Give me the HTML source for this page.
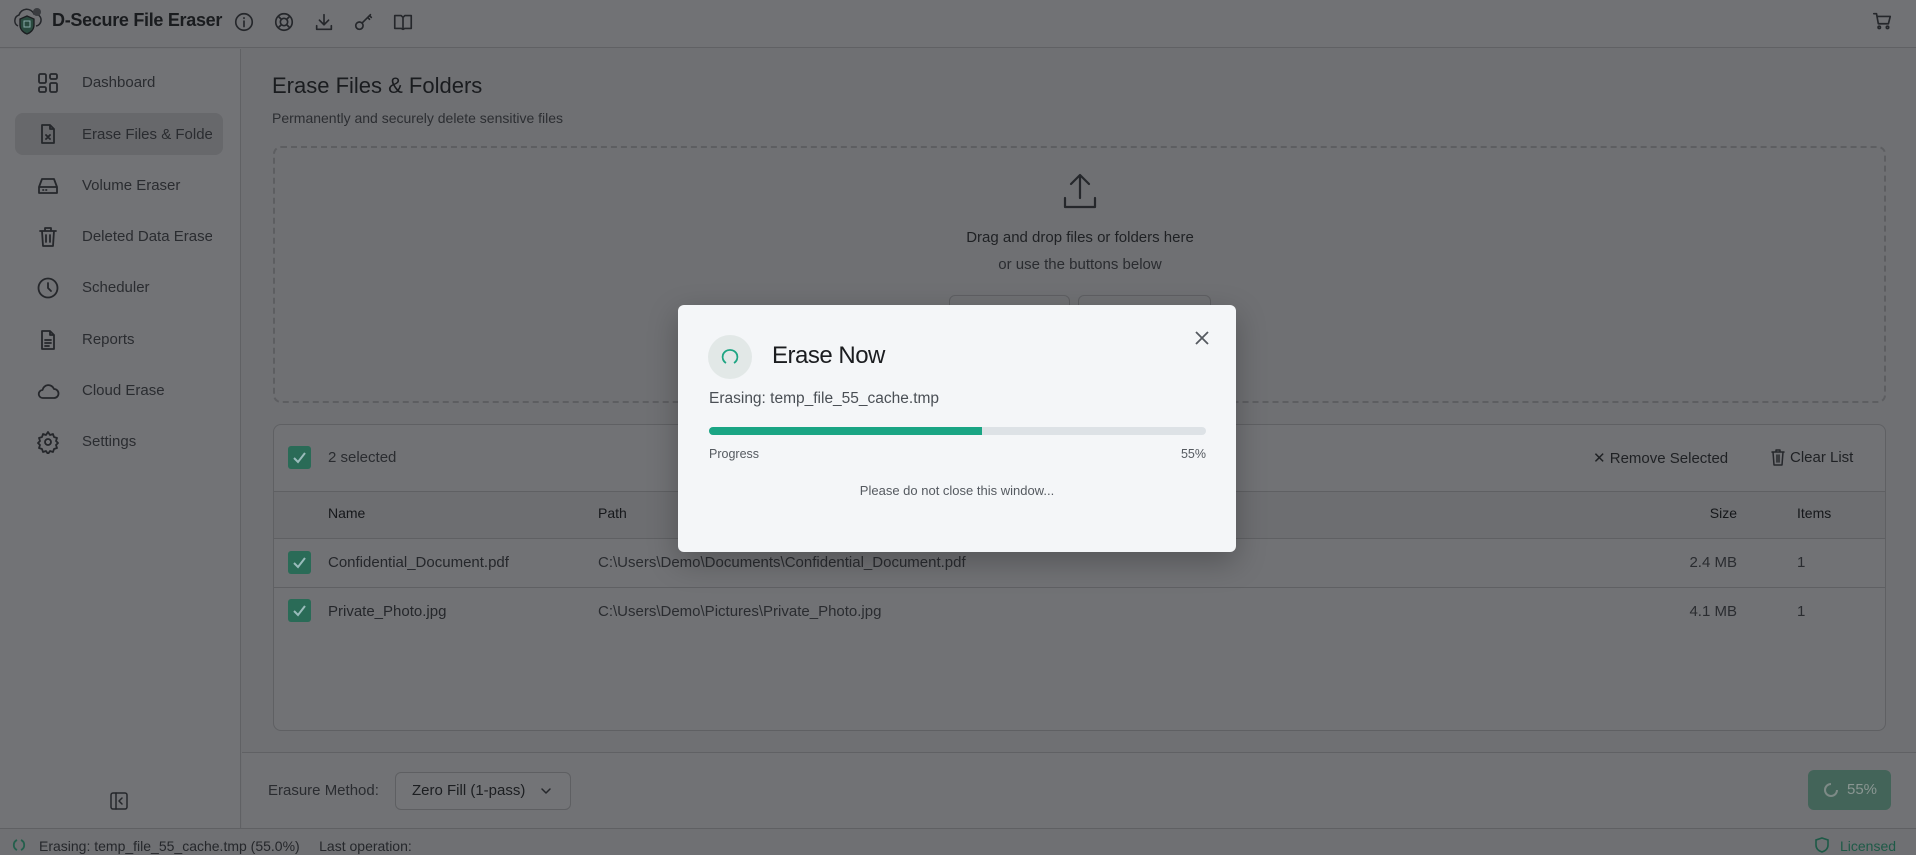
<!DOCTYPE html>
<html><head><meta charset="utf-8"><style>
*{box-sizing:border-box;margin:0;padding:0}
body{width:1916px;height:855px;overflow:hidden;background:#6f7073;font-family:"Liberation Sans",sans-serif;position:relative;color:#1c1e21}
.a{position:absolute}
.t{position:absolute;white-space:nowrap}
.nav{color:#2a2c30;font-size:15px}
.ic{position:absolute;stroke:#25272b;fill:none;stroke-width:1.8;stroke-linecap:round;stroke-linejoin:round}
.cb{position:absolute;width:23px;height:23px;background:#2a6b57;border-radius:3px}
.cb svg{position:absolute;left:3px;top:3px}
</style></head><body>
<!-- header -->
<div class="a" style="left:0;top:0;width:1916px;height:48px;background:#717275;border-bottom:1px solid #606164"></div>
<svg class="a" style="left:10px;top:6px" width="34" height="32" viewBox="0 0 34 32"><path d="M8 20a6 6 0 0 1 1-11 8 8 0 0 1 15-1 6 6 0 0 1 2 12" fill="none" stroke="#25272b" stroke-width="1.5"/><path d="M17 10l7 3v6c0 5-4 8-7 9-3-1-7-4-7-9v-6z" fill="#2a4a3f" stroke="#1b1d20" stroke-width="1.3"/><rect x="14" y="15" width="6" height="6" fill="none" stroke="#8aa" stroke-width="1"/><circle cx="27" cy="6" r="4" fill="#3a3c40"/></svg>
<div class="t" style="left:52px;top:10px;font-size:18px;color:#1a1c1f;font-weight:bold;letter-spacing:-0.3px">D-Secure File Eraser</div>
<svg class="ic" style="left:233px;top:11px" width="22" height="22" viewBox="0 0 24 24"><circle cx="12" cy="12" r="9"/><path d="M12 11v6M12 7.5v.5"/></svg>
<svg class="ic" style="left:273px;top:11px" width="22" height="22" viewBox="0 0 24 24"><circle cx="12" cy="12" r="9"/><circle cx="12" cy="12" r="4"/><path d="M6 6l3 3M18 6l-3 3M6 18l3-3M18 18l-3-3"/></svg>
<svg class="ic" style="left:313px;top:11px" width="22" height="22" viewBox="0 0 24 24"><path d="M12 4v11M7 10l5 5 5-5M4 16v4h16v-4"/></svg>
<svg class="ic" style="left:353px;top:11px" width="22" height="22" viewBox="0 0 24 24"><circle cx="7" cy="16" r="4"/><path d="M10 13l9-9M16 7l2 2M18 5l2 2"/></svg>
<svg class="ic" style="left:392px;top:11px" width="22" height="22" viewBox="0 0 24 24"><path d="M3 5h7l2 2 2-2h7v14h-7l-2 1-2-1H3zM12 7v13"/></svg>
<svg class="ic" style="left:1871px;top:10px" width="22" height="22" viewBox="0 0 24 24"><path d="M3 4h3l2 11h11l2-8H7"/><circle cx="9" cy="19" r="1.3"/><circle cx="18" cy="19" r="1.3"/></svg>
<!-- sidebar -->
<div class="a" style="left:0;top:49px;width:241px;height:779px;background:#727376;border-right:1px solid #606164"></div>
<div class="a" style="left:15px;top:113px;width:208px;height:42px;background:#67686b;border-radius:8px"></div>
<svg class="ic" style="left:36px;top:71px" width="24" height="24" viewBox="0 0 24 24"><rect x="3" y="3" width="7" height="9" rx="1.5"/><rect x="14" y="3" width="7" height="5" rx="1.5"/><rect x="14" y="12" width="7" height="9" rx="1.5"/><rect x="3" y="16" width="7" height="5" rx="1.5"/></svg>
<div class="t nav" style="left:82px;top:74px">Dashboard</div>
<svg class="ic" style="left:36px;top:122px" width="24" height="24" viewBox="0 0 24 24"><path d="M14 3H6v18h12V7zM14 3v4h4M10 13l4 4M14 13l-4 4"/></svg>
<div class="t nav" style="left:82px;top:126px;width:130px;overflow:hidden">Erase Files &amp; Folders</div>
<svg class="ic" style="left:36px;top:174px" width="24" height="24" viewBox="0 0 24 24"><path d="M3 13l3-8h12l3 8v6H3zM3 13h18M7 16h.5M10 16h.5"/></svg>
<div class="t nav" style="left:82px;top:177px">Volume Eraser</div>
<svg class="ic" style="left:36px;top:225px" width="24" height="24" viewBox="0 0 24 24"><path d="M4 6h16M9 6V3h6v3M6 6l1 15h10l1-15M10 10v7M14 10v7"/></svg>
<div class="t nav" style="left:82px;top:228px;width:130px;overflow:hidden">Deleted Data Eraser</div>
<svg class="ic" style="left:36px;top:276px" width="24" height="24" viewBox="0 0 24 24"><circle cx="12" cy="12" r="9.5"/><path d="M12 7v5l3 3"/></svg>
<div class="t nav" style="left:82px;top:279px">Scheduler</div>
<svg class="ic" style="left:36px;top:328px" width="24" height="24" viewBox="0 0 24 24"><path d="M14 3H6v18h12V7zM14 3v4h4M9 12h6M9 15h6M9 18h4"/></svg>
<div class="t nav" style="left:82px;top:331px">Reports</div>
<svg class="ic" style="left:36px;top:379px" width="24" height="24" viewBox="0 0 24 24"><path d="M7 19a4 4 0 0 1-.5-8A6 6 0 0 1 18 10a4.5 4.5 0 0 1 0 9z"/></svg>
<div class="t nav" style="left:82px;top:382px">Cloud Erase</div>
<svg class="ic" style="left:36px;top:430px" width="24" height="24" viewBox="0 0 24 24"><circle cx="12" cy="12" r="3"/><path d="M12 2l2 3 3-1 1 3 3 1-1 3 2 2-2 2 1 3-3 1-1 3-3-1-2 3-2-3-3 1-1-3-3-1 1-3-2-2 2-2-1-3 3-1 1-3 3 1z"/></svg>
<div class="t nav" style="left:82px;top:433px">Settings</div>
<svg class="ic" style="left:110px;top:792px;stroke-width:1.5" width="18" height="18" viewBox="0 0 18 18"><rect x="1" y="1" width="16" height="16" rx="2"/><path d="M6 1v16M12 6l-3 3 3 3"/></svg>
<!-- main -->
<div class="t" style="left:272px;top:73px;font-size:22px;color:#1a1c1f">Erase Files &amp; Folders</div>
<div class="t" style="left:272px;top:110px;font-size:14px;color:#2c2e32">Permanently and securely delete sensitive files</div>
<div class="a" style="left:273px;top:146px;width:1613px;height:257px;border:2px dashed #5d5e61;border-radius:8px"></div>
<svg class="ic" style="left:1060px;top:172px;stroke-width:2.2" width="40" height="40" viewBox="0 0 40 40"><path d="M20 4v22M11 12l9-9 9 9M5 26v9h30v-9"/></svg>
<div class="t" style="left:0;width:2160px;text-align:center;top:229px;font-size:15px;color:#1f2124">Drag and drop files or folders here</div>
<div class="t" style="left:0;width:2160px;text-align:center;top:256px;font-size:15px;color:#2a2c30">or use the buttons below</div>
<div class="a" style="left:949px;top:295px;width:121px;height:40px;border:1px solid #5e5f62;border-radius:6px"></div>
<div class="a" style="left:1078px;top:295px;width:133px;height:40px;border:1px solid #5e5f62;border-radius:6px"></div>
<!-- table card -->
<div class="a" style="left:273px;top:424px;width:1613px;height:307px;border:1px solid #5f6063;border-radius:8px;background:#717275;overflow:hidden">
 <div class="a" style="left:0;top:66px;width:100%;height:48px;background:#6d6e71;border-top:1px solid #5f6063;border-bottom:1px solid #5f6063"></div>
 <div class="a" style="left:0;top:162px;width:100%;height:1px;background:#5f6063"></div>
</div>
<div class="cb" style="left:288px;top:446px"><svg width="17" height="17" viewBox="0 0 17 17"><path d="M3 9l4 4 7-9" stroke="#9bb" stroke-width="2" fill="none"/></svg></div>
<div class="t" style="left:328px;top:449px;font-size:15px;color:#2a2c30">2 selected</div>
<div class="t" style="left:1593px;top:449px;font-size:15px;color:#1f2124">✕ Remove Selected</div>
<svg class="ic" style="left:1771px;top:449px;stroke-width:1.5" width="14" height="17" viewBox="0 0 14 17"><path d="M1 3h12M5 3V1h4v2M2 3l1 13h8l1-13M6 6v7M8 6v7"/></svg>
<div class="t" style="left:1790px;top:449px;font-size:15px;color:#1f2124">Clear List</div>
<div class="t" style="left:328px;top:505px;font-size:14px;color:#15171a">Name</div>
<div class="t" style="left:598px;top:505px;font-size:14px;color:#15171a">Path</div>
<div class="t" style="left:1680px;width:57px;text-align:right;top:505px;font-size:14px;color:#15171a">Size</div>
<div class="t" style="left:1797px;top:505px;font-size:14px;color:#15171a">Items</div>
<div class="cb" style="left:288px;top:551px"><svg width="17" height="17" viewBox="0 0 17 17"><path d="M3 9l4 4 7-9" stroke="#9bb" stroke-width="2" fill="none"/></svg></div>
<div class="t" style="left:328px;top:554px;font-size:15px;color:#25272b">Confidential_Document.pdf</div>
<div class="t" style="left:598px;top:554px;font-size:15px;color:#2a2c30">C:\Users\Demo\Documents\Confidential_Document.pdf</div>
<div class="t" style="left:1660px;width:77px;text-align:right;top:554px;font-size:15px;color:#2a2c30">2.4 MB</div>
<div class="t" style="left:1797px;top:554px;font-size:15px;color:#2a2c30">1</div>
<div class="cb" style="left:288px;top:599px"><svg width="17" height="17" viewBox="0 0 17 17"><path d="M3 9l4 4 7-9" stroke="#9bb" stroke-width="2" fill="none"/></svg></div>
<div class="t" style="left:328px;top:603px;font-size:15px;color:#25272b">Private_Photo.jpg</div>
<div class="t" style="left:598px;top:603px;font-size:15px;color:#2a2c30">C:\Users\Demo\Pictures\Private_Photo.jpg</div>
<div class="t" style="left:1660px;width:77px;text-align:right;top:603px;font-size:15px;color:#2a2c30">4.1 MB</div>
<div class="t" style="left:1797px;top:603px;font-size:15px;color:#2a2c30">1</div>
<!-- footer -->
<div class="a" style="left:242px;top:752px;width:1674px;height:76px;background:#717275;border-top:1px solid #606164"></div>
<div class="t" style="left:268px;top:782px;font-size:15px;color:#2a2c30">Erasure Method:</div>
<div class="a" style="left:395px;top:772px;width:176px;height:38px;border:1px solid #5e5f62;border-radius:6px;background:#737477"></div>
<div class="t" style="left:412px;top:782px;font-size:15px;color:#1c1e21">Zero Fill (1-pass)</div>
<svg class="ic" style="left:540px;top:785px;stroke-width:1.5" width="12" height="12" viewBox="0 0 12 12"><path d="M2 4l4 4 4-4"/></svg>
<div class="a" style="left:1808px;top:770px;width:83px;height:40px;background:#436459;border-radius:6px"></div>
<svg class="a" style="left:1823px;top:782px" width="16" height="16" viewBox="0 0 16 16"><path d="M14 8A6 6 0 1 1 8 2" stroke="#7d8a86" stroke-width="2" fill="none"/></svg>
<div class="t" style="left:1847px;top:781px;font-size:15px;color:#8a9692">55%</div>
<!-- status bar -->
<div class="a" style="left:0;top:828px;width:1916px;height:27px;background:#6f7073;border-top:1px solid #5f6063"></div>
<svg class="a" style="left:12px;top:838px" width="14" height="14" viewBox="0 0 14 14"><path d="M5 12A5.5 5.5 0 0 1 5 2M9 2a5.5 5.5 0 0 1 0 10" stroke="#245f4c" stroke-width="1.8" fill="none"/></svg>
<div class="t" style="left:39px;top:838px;font-size:14px;color:#25272b">Erasing: temp_file_55_cache.tmp (55.0%)&nbsp;&nbsp;&nbsp;&nbsp;&nbsp;Last operation:</div>
<svg class="a" style="left:1815px;top:837px" width="14" height="16" viewBox="0 0 14 16"><path d="M7 1l6 2v5c0 4-3 6-6 7-3-1-6-3-6-7V3z" stroke="#1e5a47" stroke-width="1.6" fill="none"/></svg>
<div class="t" style="left:1840px;top:838px;font-size:14px;color:#1e5a47">Licensed</div>
<!-- modal -->
<div class="a" style="left:678px;top:305px;width:558px;height:247px;background:#f4f6f8;border-radius:6px;box-shadow:0 10px 30px rgba(0,0,0,.25)"></div>
<div class="a" style="left:708px;top:335px;width:44px;height:44px;border-radius:50%;background:#e2e8e7"></div>
<svg class="a" style="left:721px;top:348px" width="18" height="18" viewBox="0 0 18 18"><path d="M5 15A7 7 0 0 1 9 2M9 2a7 7 0 0 1 4 13" stroke="#1ea583" stroke-width="1.8" fill="none"/></svg>
<div class="t" style="left:772px;top:342px;font-size:24px;color:#1b1d20;letter-spacing:-0.5px;font-weight:500">Erase Now</div>
<svg class="a" style="left:1194px;top:330px" width="16" height="16" viewBox="0 0 16 16"><path d="M2 2l12 12M14 2L2 14" stroke="#555a60" stroke-width="1.8"/></svg>
<div class="t" style="left:709px;top:390px;font-size:15.5px;color:#4a4f55">Erasing: temp_file_55_cache.tmp</div>
<div class="a" style="left:709px;top:427px;width:497px;height:8px;border-radius:4px;background:#dde2e6;overflow:hidden"><div style="width:273px;height:8px;background:#1aa584"></div></div>
<div class="t" style="left:709px;top:447px;font-size:12.5px;color:#555a60">Progress</div>
<div class="t" style="left:1150px;width:56px;text-align:right;top:447px;font-size:12.5px;color:#555a60">55%</div>
<div class="t" style="left:678px;width:558px;text-align:center;top:483px;font-size:13px;color:#555a60">Please do not close this window...</div>
</body></html>
